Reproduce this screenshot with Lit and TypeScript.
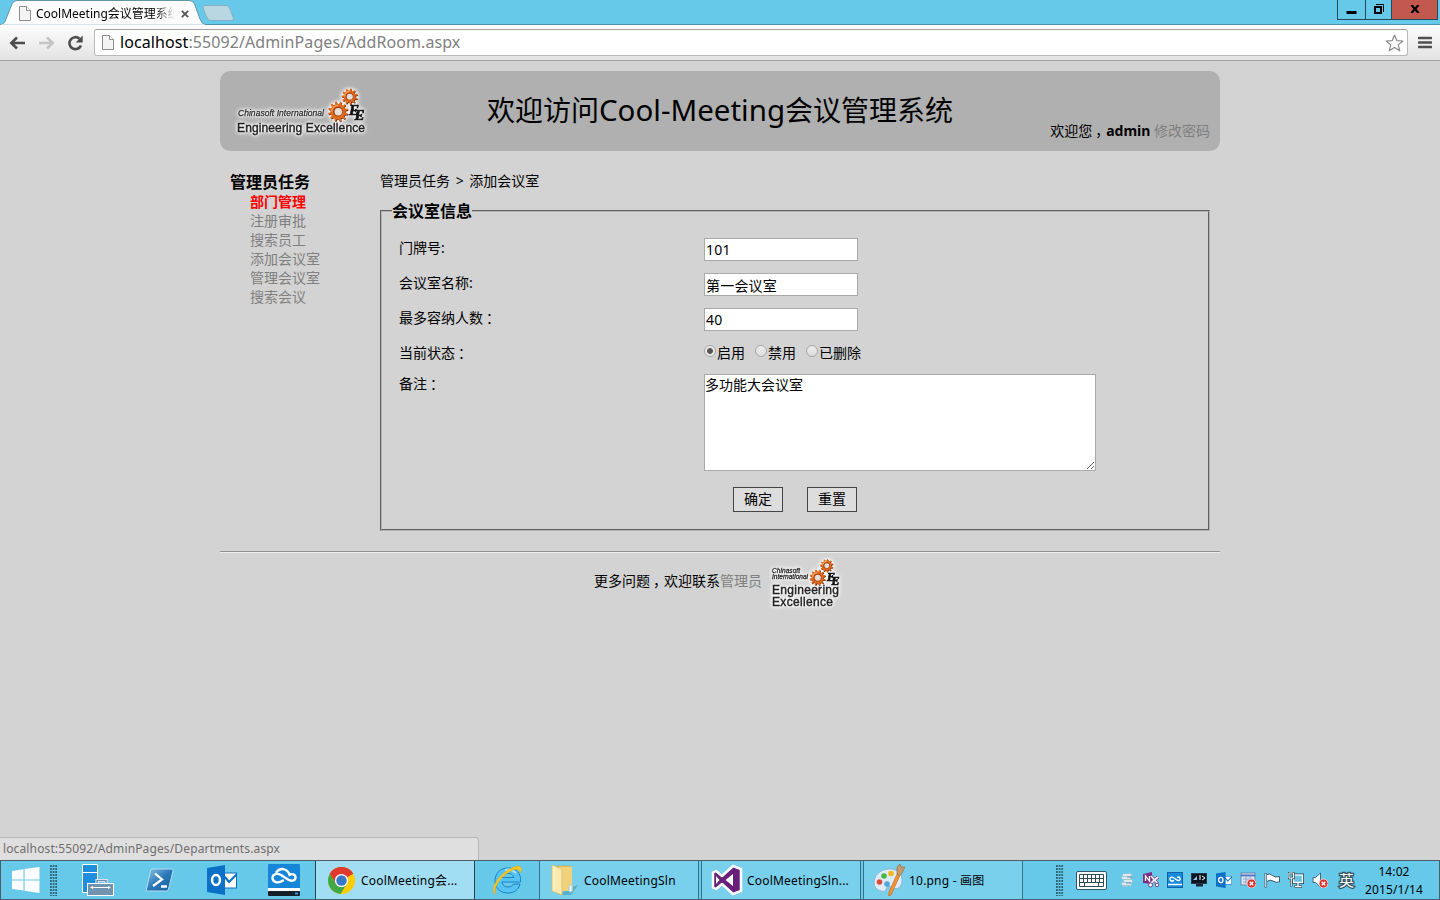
import { LitElement, html, svg, css } from "lit";
import { customElement } from "lit/decorators.js";

const gear = (cx: number, cy: number, r: number, teeth: number) => {
  const pts: string[] = [];
  const step = (Math.PI * 2) / teeth;
  const inner = r * 0.76;
  for (let i = 0; i < teeth; i++) {
    const a = i * step + 0.15;
    [[inner, 0], [r, 0.12], [r, 0.42], [inner, 0.55]].forEach(([d, f]) => {
      pts.push(`${(cx + d * Math.cos(a + f * step)).toFixed(2)},${(cy + d * Math.sin(a + f * step)).toFixed(2)}`);
    });
  }
  return svg`<g>
    <polygon points=${pts.join(" ")} fill="#6d2d0c" transform="translate(.6 .7)"/>
    <polygon points=${pts.join(" ")} fill="#e06a1e"/>
    <circle cx=${cx} cy=${cy} r=${r * 0.5} fill="#a8430f"/>
    <circle cx=${cx + 0.3} cy=${cy + 0.3} r=${r * 0.38} fill="#e4dedb"/>
    <path d=${`M${cx - r * 0.62} ${cy}A${r * 0.62} ${r * 0.62} 0 0 1 ${cx} ${cy - r * 0.62}`} fill="none" stroke="#f9a55c" stroke-width="1.2"/>
  </g>`;
};

const ee = (x: number, y: number, s: number) => svg`
  <text x=${x} y=${y} font-family="Liberation Serif, serif" font-weight="bold" font-style="italic" font-size=${s} fill="#111" stroke="#111" stroke-width=".7">E<tspan dx=${-s * 0.3} dy=${s * 0.34}>E</tspan></text>`;

const wideLogo = html`<svg width="144" height="56" viewBox="0 0 144 56">
  <g class="glow">
    <text x="8" y="32" font-size="8.5" font-style="italic" textLength="86" stroke="#333" stroke-width=".25">Chinasoft International</text>
    <text x="7" y="47.800" font-size="12" textLength="128" stroke="#222" stroke-width=".4">Engineering Excellence</text>
    ${gear(119.5, 12.5, 8, 11)}${gear(108, 27.5, 10, 12)}${ee(119, 31, 15)}
  </g></svg>`;

const smallLogo = html`<svg width="76" height="56" viewBox="0 0 76 56">
  <g class="glow">
    <text x="4" y="16" font-size="6.500" font-style="italic" textLength="28" stroke="#333" stroke-width=".3">Chinasoft</text>
    <text x="4" y="22" font-size="6.500" font-style="italic" textLength="36" stroke="#333" stroke-width=".3">International</text>
    <text x="4" y="37" font-size="12" textLength="67" stroke="#222" stroke-width=".4">Engineering</text>
    <text x="4" y="49" font-size="12" textLength="61" stroke="#222" stroke-width=".4">Excellence</text>
    ${gear(58.5, 8.5, 6.5, 11)}${gear(49.5, 20.5, 8, 12)}${ee(59, 23.5, 12)}
  </g></svg>`;

const pageIcon = html`<svg width="12" height="15" viewBox="0 0 12 15">
  <path d="M.5.5H7.5L11.5 4.5V14.5H.5Z" fill="#f4f4f4" stroke="#8d8d8d"/><path d="M7.5.5V4.5H11.5" fill="#fff" stroke="#8d8d8d"/></svg>`;

const winIcon = html`<svg width="28" height="26" viewBox="0 0 28 26" fill="#fff">
  <path d="M0 4 11.5 2.3V12.4H0ZM12.6 2.1 27.5 0V12.4H12.6ZM0 13.5H11.5V23.6L0 22ZM12.6 13.5H27.5V26L12.6 23.8Z"/></svg>`;

const serverIcon = html`<svg width="32" height="34" viewBox="0 0 32 34">
  <path d="M.5 1.5H15.5V29.5H.5Z" fill="#1f8fdd" stroke="#fff"/><path d="M.5 9.5H15.5" stroke="#fff"/>
  <path d="M15 21V17.5H24V21" fill="none" stroke="#fff" stroke-width="3"/><path d="M15 21V17.5H24V21" fill="none" stroke="#6c8fac" stroke-width="1.5"/>
  <rect x="5.5" y="20.5" width="26" height="12" fill="#7193ae" stroke="#fff"/>
  <path d="M9 24.5H28" stroke="#fff"/><path d="M8 24.5l3-1.500v3ZM29 24.5l-3-1.500v3Z" fill="#fff"/></svg>`;

const psIcon = html`<svg width="30" height="24" viewBox="0 0 30 24">
  <defs><linearGradient id="ps" x1="0" y1="0" x2="1" y2="1"><stop offset="0" stop-color="#8ec4e6"/><stop offset=".5" stop-color="#2b78b8"/><stop offset="1" stop-color="#1c5d9a"/></linearGradient></defs>
  <path d="M7 1H27Q28.5 1 28 3L23.500 21Q23 23 21 23H2.500Q1 23 1.500 21L5.500 3Q6 1 7 1Z" fill="url(#ps)" stroke="#b5dcf0"/>
  <path d="M10 5.500 17 11.500 8 18M16 18.500H22" fill="none" stroke="#fff" stroke-width="2.300"/></svg>`;

const outlook = (s: number) => html`<svg width=${s} height=${s} viewBox="0 0 30 30">
  <rect x="16" y="8" width="13.500" height="15" fill="#fff" stroke="#0a6fc5"/><path d="M17 11 22 17 30 9" fill="none" stroke="#0a6fc5" stroke-width="2"/>
  <path d="M0 3 18 0V30L0 27Z" fill="#0a70c8"/><ellipse cx="9" cy="15" rx="4" ry="5" fill="none" stroke="#fff" stroke-width="2.600"/></svg>`;

const cloudIcon = (s: number) => html`<svg width=${s} height=${s} viewBox="0 0 32 32">
  <rect width="32" height="25" rx="1" fill="#1585d8"/><rect y="24" width="32" height="3" fill="#fff"/><rect y="27" width="32" height="5" rx="1" fill="#15202a"/><rect x="27" y="28.500" width="3" height="2" fill="#2a9be8"/>
  <path d="M15 16.500C10 20 4.500 18 4.500 14 4.500 9.500 10 9 13 11L20 15.500C23 17.500 27.500 17 27.500 13.500 27.500 10 23.500 9.500 21.500 11M8.500 8C12 3.500 19 4 21.500 10.500" fill="none" stroke="#fff" stroke-width="2.400" stroke-linecap="round"/></svg>`;

const chromeIcon = html`<svg width="29" height="29" viewBox="0 0 30 30">
  <circle cx="15" cy="15" r="14" fill="#fc0"/>
  <path d="M15 15 2.900 8A14 14 0 0 1 27.100 8Z" fill="#e1392d"/><path d="M15 8H27.100A14 14 0 0 0 2.900 8L9 18Z" fill="#e1392d"/>
  <path d="M2.900 8A14 14 0 0 0 14 29L20.500 18.500 15 20 9.500 18.500Z" fill="#42a845"/>
  <circle cx="15" cy="15" r="6.800" fill="#fff"/><circle cx="15" cy="15" r="5.400" fill="#3878c7"/></svg>`;

const ieIcon = html`<svg width="32" height="32" viewBox="0 0 32 32">
  <path d="M29 20H22.500C21.500 22 19.500 23 17 23 13.500 23 11.300 21 11 18H29.500C30.500 9 25 4 17 4 9 4 4 9.500 4 17 4 24.500 9.500 29 17 29 23 29 27.500 26 29 20ZM11 13.500C11.500 11 14 9.300 17 9.300S22.200 11 22.700 13.500Z" fill="#55c4f2" stroke="#1c82c4"/>
  <path d="M14 6Q20 4 25 9" stroke="#a6e2fa" stroke-width="2" fill="none"/>
  <path d="M4.500 30C-1 28 4 16 13 9 20 3 29 0 30 4 30.500 5.500 30 7 29 9 29 4.500 24 4 18 8 8 14 2 25 4.500 30Z" fill="#fccb1d" stroke="#e0a616" stroke-width=".6"/></svg>`;

const folderIcon = html`<svg width="28" height="32" viewBox="0 0 28 32">
  <path d="M18 24 27 21 20 31H8Z" fill="#3d8db0" opacity=".5"/>
  <path d="M6 2H20V26H6Z" fill="#e5c466" stroke="#c9a748" stroke-width=".6"/><path d="M8 3H21V21H22V27H8Z" fill="#f0d27d"/>
  <path d="M1 1 11 5V31L1 27Z" fill="#fbe9ae" stroke="#dcbd64" stroke-width=".8"/><path d="M3 2V27" stroke="#fff8da"/>
  <rect x="18" y="21" width="3" height="7" rx="1" fill="#eaf6fc" stroke="#7fb8d6" stroke-width=".6"/></svg>`;

const vsIcon = html`<svg width="32" height="32" viewBox="0 0 32 32">
  <path d="M22 2 30 5V27L22 30 11 20 5 25 2 23.500V8.500L5 7 11 12Z" fill="#68217a" stroke="#fff" stroke-width="2.500" stroke-linejoin="round"/>
  <path d="M22 10V22L14.500 16ZM5 12 8.500 16 5 20Z" fill="#fff"/></svg>`;

const paintIcon = html`<svg width="32" height="32" viewBox="0 0 32 32">
  <path d="M15 5C24 4 30 10 29 18 28 25 22 26 19 23 16 21 13 23 13 26 12 29 1 27 1 19 1 11 7 6 15 5Z" fill="#dcecf8" stroke="#8db3cf"/>
  <circle cx="6.500" cy="18" r="2.800" fill="#e04a3a"/><circle cx="11" cy="12" r="2.800" fill="#4bb648"/><circle cx="18" cy="9.500" r="2.800" fill="#f4b51d"/><circle cx="14" cy="20" r="2.800" fill="#4da6dc"/>
  <path d="M24 10 27 11.500 18 31 15.500 32 16 28Z" fill="#ee9234" stroke="#c26a1c" stroke-width=".6"/>
  <path d="M24 10 24 3 27 0 28 3 32 3 29 9 27 11.500Z" fill="#c79a6a" stroke="#8d653c" stroke-width=".6"/></svg>`;

const keyboardIcon = html`<svg width="31" height="19" viewBox="0 0 31 19">
  <rect x=".5" y=".5" width="30" height="18" rx="1.500" fill="#fff" stroke="#2f5666"/>
  <path d="M3.500 3.500H27.500V15.500H3.500ZM3.500 7.500H27.500M3.500 11.500H27.500M7.500 3.500V11.500M11.500 3.500V11.500M15.500 3.500V11.500M19.500 3.500V11.500M23.500 3.500V11.500M8.500 11.500V15.500M22.500 11.500V15.500" fill="none" stroke="#2f4a56"/></svg>`;

const badge = svg`<circle cx="11.500" cy="11.500" r="4.500" fill="#d9302c" stroke="#fff" stroke-width=".7"/><path d="M9.700 9.700l3.600 3.600M13.300 9.700l-3.600 3.600" stroke="#fff" stroke-width="1.300"/>`;

const tray = [
  html`<svg width="16" height="16" viewBox="0 0 16 16"><path d="M4 2 11 1 14 3 12 6 14 9 12 14 4 15 2 11 5 8 2 5Z" fill="#a9c6d4"/><path d="M4 3H12M3 6H11M5 9H13M3 12H12" stroke="#eef6fa" stroke-width="1.500"/><path d="M8 5H13M7 11H12" stroke="#6694ac"/></svg>`,
  html`<svg width="16" height="16" viewBox="0 0 16 16"><path d="M0 2 9 0V12L0 11Z" fill="#7c2f86"/><path d="M2.500 9V4L6.500 9V4" fill="none" stroke="#fff" stroke-width="1.300"/><path d="M8 4 15 12M15 5 7 12" stroke="#76448a" stroke-width="3"/><path d="M8 4 15 12M15 5 7 12" stroke="#f1f1f1" stroke-width="1.700"/><circle cx="7.500" cy="13" r="2" fill="#fff" stroke="#76448a"/><circle cx="14" cy="13" r="1.700" fill="#fff" stroke="#76448a"/></svg>`,
  html`<svg width="16" height="16" viewBox="0 0 16 16"><rect x=".5" y=".5" width="15" height="15" fill="#178bdc" stroke="#0b62a8"/><path d="M1 12.500H15" stroke="#fff" stroke-width="1.500"/><path d="M7 8.500C3 10.500 1.500 6 4.500 5.200 7 4.500 9 9 12 8.500 14.500 7.500 12.500 4 10 5.500" fill="none" stroke="#fff" stroke-width="1.400"/></svg>`,
  html`<svg width="16" height="16" viewBox="0 0 16 16"><rect x=".5" y="1.500" width="15" height="10" fill="#0a1420" stroke="#25394a"/><path d="M2 8 6 4V8Z" fill="#8fc6ea"/><path d="M9 3V8M11 4l3 2-3 2" stroke="#fff" fill="none"/><rect x="5" y="12" width="7" height="2.500" fill="#1a2834"/></svg>`,
  outlook(16),
  html`<svg width="16" height="16" viewBox="0 0 16 16"><rect x="1" y="1" width="14" height="12" fill="#dfe8f4" stroke="#6683b5"/><path d="M1 3.500H15" stroke="#5275bd" stroke-width="2"/><path d="M3 7H13M3 10H13M6 5V12M10 5V12" stroke="#8ca4cc"/>${badge}</svg>`,
  html`<svg width="16" height="16" viewBox="0 0 16 16"><path d="M2 2V15M3 2.500Q6 1 8.500 3.500T15.500 4.500V10Q12 11 9 9T3 9.500" fill="#fff" stroke="#3a5d6e"/><path d="M1.800 1V15.500" stroke="#3a5d6e" stroke-width="2.500"/><path d="M1.800 1.500V15" stroke="#fff"/></svg>`,
  html`<svg width="16" height="16" viewBox="0 0 16 16"><rect x="5.500" y="3" width="9" height="7.500" fill="#6bc3e0" stroke="#2c4e5d" stroke-width="3"/><path d="M10 11V14M6.500 14.500H14" stroke="#2c4e5d" stroke-width="3"/><rect x="5.500" y="3" width="9" height="7.500" fill="#6bc3e0" stroke="#fff" stroke-width="1.300"/><path d="M10 11V14M7 14.500H13.500" stroke="#fff" stroke-width="1.300"/><path d="M1 1H5.500V6H1ZM3.300 6V14.500" fill="#6bc3e0" stroke="#2c4e5d" stroke-width="2.400"/><path d="M1 1H5.500V6H1ZM3.300 6V14" fill="none" stroke="#fff"/></svg>`,
  html`<svg width="16" height="16" viewBox="0 0 16 16"><path d="M1 5.500H3.500L8.500 1V15L3.500 10.500H1Z" fill="#fff" stroke="#46697a"/>${badge}</svg>`,
];

@customElement("app-root")
export class AppRoot extends LitElement {
  static styles = css`
    :host { display: flex; flex-direction: column; position: relative; width: 1440px; height: 900px; overflow: hidden; background: #d3d3d3; color: #000; font-family: "Noto Sans", "Noto Sans CJK SC", sans-serif; font-size: 14px; line-height: 19px; }
    * { box-sizing: border-box; }
    svg { display: block; flex: none; }
    .tabs { display: flex; height: 25px; flex: none; background: #66c9ea; justify-content: space-between; position: relative; }
    .tabart { position: absolute; left: 0; top: 0; }
    .tab { position: relative; display: flex; align-items: center; padding: 2px 0 0 19px; font-size: 12px; }
    .tabtitle { margin-left: 5px; width: 138px; white-space: nowrap; overflow: hidden; line-height: 18px; -webkit-mask: linear-gradient(90deg, #000 120px, transparent 139px); mask: linear-gradient(90deg, #000 120px, transparent 139px); }
    .tabclose { margin-left: 7px; }
    .winctl { display: flex; height: 20px; margin-right: 2px; position: relative; }
    .wb { display: grid; place-items: center; border: 1px solid #234a5a; border-top: 0; width: 29px; margin-left: -1px; }
    .wb.mid { width: 27px; }
    .wb.close { width: 47px; background: #c2584e; }
    .wb svg { margin-bottom: 2px; }
    .toolbar { height: 36px; flex: none; display: flex; align-items: center; background: linear-gradient(#fdfdfd, #e3e3e3); border-bottom: 1px solid #a3a3a3; padding: 0 8px 0 9px; }
    .nav { margin-right: 12px; }
    .omni { flex: 1; height: 27px; margin-left: -2px; display: flex; align-items: center; background: #fff; border: 1px solid #b9b9b9; border-top-color: #a2a2a2; border-radius: 3px; padding: 0 3px 0 7px; }
    .url { flex: 1; margin-left: 6px; font-size: 16px; letter-spacing: .09px; color: #808080; }
    .dark { color: #000; }
    .menu { margin-left: 10px; }
    .page { flex: 1; width: 1000px; margin: 10px auto 0; }
    .head { height: 80px; border-radius: 10px; background: #b0b0b0; display: grid; grid-template-columns: 1fr auto 1fr; padding: 0 10px; }
    .logo { padding-top: 13px; }
    .title { font-size: 28px; line-height: 78px; height: 80px; }
    .lat { font-size: 29.5px; line-height: 1; }
    .user { align-self: end; text-align: right; padding-bottom: 11px; }
    .grey { color: #808080; }
    .p { display: inline-block; width: 14px; padding-left: 3px; }
    .main { display: flex; padding: 10px 10px 0; }
    .side { width: 150px; padding-top: 11px; }
    .side h3 { font-size: 16px; line-height: 20px; margin: 0; }
    .side ul { list-style: none; margin: 0; padding: 0 0 0 20px; color: #808080; }
    .side .on { color: red; font-weight: bold; }
    .content { flex: 1; }
    .crumb { padding-top: 10px; word-spacing: 2px; }
    fieldset { margin: 10px 0 0; height: 331px; border: 2px groove #b4b4b4; padding: 16px 17px 0; min-width: 0; }
    legend { font-size: 16px; font-weight: bold; line-height: 22px; padding: 0; margin-left: -7px; }
    .row { display: grid; grid-template-columns: 305px 1fr; height: 35px; align-items: start; }
    input[type="text"] { display: block; width: 154px; height: 23px; padding: 0 1px; border: 1px solid #a9a9a9; font: 14px "Noto Sans", "Noto Sans CJK SC", sans-serif; letter-spacing: .2px; background: #fff; outline: 0; border-radius: 0; }
    textarea { display: block; width: 392px; height: 97px; padding: 0; border: 1px solid #a9a9a9; font: 14px/19px "Noto Sans", "Noto Sans CJK SC", sans-serif; outline: 0; }
    .radios { display: flex; }
    .radios label { display: flex; margin-right: 10px; }
    input[type="radio"] { appearance: none; width: 12px; height: 12px; margin: 2px 1px 0 0; border: 1px solid #a6a6a6; border-radius: 50%; background: linear-gradient(#eee, #dcdcdc); }
    input[type="radio"]:checked { background: radial-gradient(circle, #555 0 2.5px, #e8e8e8 3.3px); }
    .note { height: 113px; margin-top: -4px; }
    .actions { display: flex; gap: 24px; padding-left: 334px; }
    button { font: 14px "Noto Sans CJK SC", sans-serif; width: 50px; height: 25px; padding: 0 0 2px; border: 1px solid #444; background: #ddd; line-height: 21px; }
    .foot { margin-top: 20px; border-top: 1px solid #8f8f8f; box-shadow: inset 0 1px #eee; display: flex; justify-content: center; align-items: center; padding: 6px 2px 0 0; height: 61px; gap: 6px; }
    .contact { margin-bottom: 9px; }
    .glow { filter: drop-shadow(0 0 1.5px #fff) drop-shadow(0 0 2px #fff); font-family: "Liberation Sans", sans-serif; fill: #222; }
    .status { position: absolute; left: 0; top: 837px; width: 479px; height: 24px; border: 1px solid #b7b7b7; border-left: 0; border-radius: 0 4px 0 0; background: #dfdfdf; color: #6e6e6e; font-size: 12px; line-height: 22px; padding-left: 3px; letter-spacing: .13px; }
    .task { position: relative; display: flex; height: 40px; flex: none; background: #66c9ea; border: 1px solid #4c5e66; align-items: stretch; font-size: 12px; }
    .slot { width: 62px; display: grid; place-items: center; }
    .slot.start { width: 49px; }
    .slot.ie { width: 64px; }
    .grip { width: 8px; margin: 4px 0 3px; background: radial-gradient(circle at 1px 1px, #2d6579 0 .8px, transparent 1.1px) 0 0 / 2.67px 3px; }
    .pins { display: flex; margin-left: 9px; }
    .app { width: 160px; display: flex; align-items: center; border: solid #397387; border-width: 0 1px; background: #78d0ed; padding-left: 11px; gap: 5px; margin-right: 2px; white-space: nowrap; letter-spacing: .2px; }
    .app.big { padding-left: 9px; gap: 4px; }
    .app.on { background: #a1def4; border-color: #25414c; margin: 0; }
    .grip.right { margin-left: auto; }
    .kb { align-self: center; margin: 0 8px 0 12px; }
    .tray { display: flex; }
    .ti { width: 24.1px; display: grid; place-items: center; }
    .ime { width: 35px; text-align: center; line-height: 38px; font-size: 15px; margin-left: -3px; color: #fff; -webkit-text-stroke: 2.5px #34525f; paint-order: stroke fill; }
    .clock { width: 60px; margin-right: 15px; text-align: center; line-height: 18px; padding-top: 2px; white-space: nowrap; letter-spacing: .1px; }
  `;

  private app(icon: unknown, name: string, mod = "") {
    return html`<div class="app ${mod}">${icon}<span>${name}</span></div>`;
  }

  private field(label: string, value: string, wide = false) {
    return html`<div class="row"><div>${label}${wide ? html`<span class="p">：</span>` : ":"}</div><input type="text" .value=${value}></div>`;
  }

  render() {
    return html`
      <div class="tabs">
        <svg class="tabart" width="1440" height="25" viewBox="0 0 1440 25">
          <path d="M0 24.500H1440" stroke="#4b91ab"/>
          <path d="M0 25C4 24 5 22 6 19L12 4Q13.500 .500 17 .500H189Q193 .500 194.500 4L200 19Q202 24.500 206 25Z" fill="#fcfcfc" stroke="#6297aa"/>
          <path d="M1 25H205" stroke="#fcfcfc"/>
          <path d="M205 5.500H226Q229 5.500 230 9L233.500 18Q234 20.500 231 20.500H211Q208 20.500 206.500 17L203 8Q202.500 5.500 205 5.500Z" fill="#b9d7e2" stroke="#85afbf"/>
        </svg>
        <div class="tab">${pageIcon}<span class="tabtitle">CoolMeeting会议管理系统</span>
          <svg class="tabclose" width="8" height="8" viewBox="0 0 8 8"><path d="M.800.800 7.200 7.200M7.200.800.800 7.200" stroke="#555" stroke-width="1.800"/></svg></div>
        <div class="winctl">
          <div class="wb"><svg width="11" height="12" viewBox="0 0 11 12"><path d="M.500 9.500H10.500" stroke="#000" stroke-width="3"/></svg></div>
          <div class="wb mid"><svg width="10" height="10" viewBox="0 0 10 10" fill="none" stroke="#000"><path d="M1 3H7V9H1Z" stroke-width="2"/><path d="M2 .500H9.500V8"/></svg></div>
          <div class="wb close"><svg width="10" height="8" viewBox="0 0 10 8"><path d="M1.500 0 8.500 8M8.500 0 1.500 8" stroke="#000" stroke-width="2.200"/></svg></div>
        </div>
      </div>
      <div class="toolbar">
        <svg class="nav" width="17" height="14" viewBox="0 0 17 14"><path d="M2 7H16M8 1.500 2.300 7 8 12.500" fill="none" stroke="#4d4d4d" stroke-width="2.600"/></svg>
        <svg class="nav" width="17" height="14" viewBox="0 0 17 14"><path d="M1 7H15M9 1.500 14.700 7 9 12.500" fill="none" stroke="#c4c4c4" stroke-width="2.600"/></svg>
        <svg class="nav" width="17" height="16" viewBox="0 0 17 16"><path d="M14 10.500A6 6 0 1 1 12.500 3.700" fill="none" stroke="#4d4d4d" stroke-width="2.600"/><path d="M15.700.500V7.500H8.700Z" fill="#4d4d4d"/></svg>
        <div class="omni">${pageIcon}<span class="url"><span class="dark">localhost</span>:55092/AdminPages/AddRoom.aspx</span>
          <svg width="19" height="18" viewBox="0 0 19 18"><path d="M9.500 1 11.800 6.600 17.800 7 13.200 10.900 14.800 16.800 9.500 13.500 4.200 16.800 5.800 10.900 1.200 7 7.200 6.600Z" fill="#fff" stroke="#8a8a8a" stroke-width="1.200" stroke-linejoin="round"/></svg></div>
        <svg class="menu" width="14" height="13" viewBox="0 0 14 13"><path d="M1 2H13M1 6.500H13M1 11H13" stroke="#505050" stroke-width="2.600" stroke-linecap="round"/></svg>
      </div>
      <div class="page">
        <div class="head">
          <div class="logo">${wideLogo}</div>
          <div class="title">欢迎访问<span class="lat">Cool-Meeting</span>会议管理系统</div>
          <div class="user">欢迎您<span class="p">，</span><b>admin</b> <span class="grey">修改密码</span></div>
        </div>
        <div class="main">
          <nav class="side"><h3>管理员任务</h3>
            <ul><li class="on">部门管理</li>${["注册审批", "搜索员工", "添加会议室", "管理会议室", "搜索会议"].map((t) => html`<li>${t}</li>`)}</ul></nav>
          <div class="content">
            <div class="crumb">管理员任务 &gt; 添加会议室</div>
            <fieldset><legend>会议室信息</legend>
              ${this.field("门牌号", "101")}${this.field("会议室名称", "第一会议室")}${this.field("最多容纳人数", "40", true)}
              <div class="row"><div>当前状态<span class="p">：</span></div>
                <div class="radios">${["启用", "禁用", "已删除"].map((t, i) => html`<label><input type="radio" name="s" ?checked=${i === 0}>${t}</label>`)}</div></div>
              <div class="row note"><div>备注<span class="p">：</span></div><textarea .value=${"多功能大会议室"}></textarea></div>
              <div class="actions"><button>确定</button><button>重置</button></div>
            </fieldset>
          </div>
        </div>
        <div class="foot"><span class="contact">更多问题<span class="p">，</span>欢迎联系<span class="grey">管理员</span></span>${smallLogo}</div>
      </div>
      <div class="status">localhost:55092/AdminPages/Departments.aspx</div>
      <div class="task">
        <div class="slot start">${winIcon}</div><div class="grip"></div>
        <div class="pins"><div class="slot">${serverIcon}</div><div class="slot">${psIcon}</div><div class="slot">${outlook(30)}</div><div class="slot">${cloudIcon(32)}</div></div>
        ${this.app(chromeIcon, "CoolMeeting会...", "on")}
        <div class="slot ie">${ieIcon}</div>
        ${this.app(folderIcon, "CoolMeetingSln")}${this.app(vsIcon, "CoolMeetingSln...", "big")}${this.app(paintIcon, "10.png - 画图", "big")}
        <div class="grip right"></div><div class="kb">${keyboardIcon}</div>
        <div class="tray">${tray.map((t) => html`<div class="ti">${t}</div>`)}</div>
        <div class="ime">英</div>
        <div class="clock">14:02<br>2015/1/14</div>
      </div>`;
  }
}
